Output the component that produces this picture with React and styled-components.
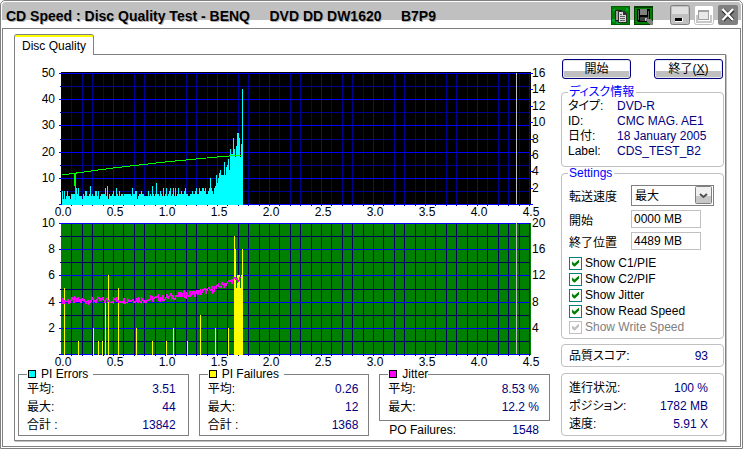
import React from 'react';
import styled, { createGlobalStyle } from 'styled-components';

const GlobalStyle = createGlobalStyle`
  * { box-sizing: border-box; }
  body {
    margin: 0;
    background: #fff;
    color: #000;
    font-family: "Liberation Sans", "Noto Sans CJK JP", sans-serif;
    font-size: 12px;
    font-feature-settings: "palt";
  }
  button, input, select { font: inherit; color: inherit; font-feature-settings: inherit; }
`;

const AppWindow = styled.div`
  display: flex;
  flex-direction: column;
  min-height: 100vh;
  padding: 1px;
  border: 1px solid #808080;
  border-radius: 5px 5px 0 0;
`;

const TitleBar = styled.header`
  display: flex;
  align-items: center;
  justify-content: space-between;
  height: 26px;
  padding: 0 3px 0 4px;
  border-radius: 4px 4px 0 0;
  background: linear-gradient(#c0c0c0 18px, #fff 18px);
`;

const Title = styled.h1`
  margin: 0;
  padding-top: 2px;
  font-size: 14px;
  line-height: 18px;
  font-weight: bold;
  white-space: pre;
  text-shadow: 1px 1px #b0b0b0;
`;

const TitleTools = styled.div`
  display: flex;
  align-items: center;
  gap: 4px;
`;

const IconButton = styled.button`
  display: block;
  width: ${(p) => (p.$wide ? 20 : 19)}px;
  height: ${(p) => (p.$wide ? 20 : 19)}px;
  margin-left: ${(p) => (p.$first ? 13 : 0)}px;
  padding: 0;
  border: 0;
  background: none;
  svg { display: block; }
`;

const Body = styled.main`
  display: flex;
  flex-direction: column;
  flex: 1;
  padding: 6px 14px 5px 11px;
  border: 1px solid #808080;
`;

const Tab = styled.button`
  z-index: 1;
  align-self: flex-start;
  height: 20px;
  margin-bottom: -1px;
  padding: 0 7px 0 7px;
  border: 1px solid #808080;
  border-top: 2px solid #ff0;
  border-bottom: 0;
  border-radius: 3px 3px 0 0;
  background: #fff;
  box-shadow: 0 -1px #808080;
  line-height: 14px;
`;

const Panel = styled.section`
  display: flex;
  flex: 1;
  gap: 5px;
  padding: 0 1px 3px 0;
  border: 1px solid #808080;
  box-shadow: 1px 1px #c0c0c0;
`;

const ChartColumn = styled.div`
  flex: 1;
  min-width: 0;
  padding-top: 9px;
`;

const ChartSvg = styled.svg`
  display: block;
  width: 100%;
  height: auto;
  overflow: visible;
  text { font-size: 12px; }
`;

const StatGroups = styled.div`
  display: grid;
  grid-template-columns: repeat(3, 1fr);
  align-items: start;
  gap: 10px;
  padding: 0 6px 0 3px;
`;

const StatBox = styled.fieldset`
  min-width: 0;
  margin: 0;
  padding: 0 ${(p) => p.$right}px ${(p) => p.$bottom}px 8px;
  border: 1px solid #808080;
`;

const StatLegend = styled.legend`
  display: flex;
  align-items: center;
  gap: 5px;
  padding: 0 ${(p) => (p.$tight ? 0 : 5)}px 0 1px;
  line-height: 12px;
`;

const Swatch = styled.span`
  width: 8px;
  height: 8px;
  border: 1px solid #000;
  background: ${(p) => p.$color};
`;

const Rows = styled.dl`
  margin: 0;
`;

const Row = styled.div`
  display: flex;
  justify-content: space-between;
  height: ${(p) => (p.$outer ? 15 : 18)}px;
  padding: ${(p) => (p.$outer ? '0 11px 0 10px' : '0')};
  line-height: 18px;
  dt, dd { margin: 0; white-space: pre; }
  dd { color: #000080; }
`;

const Sidebar = styled.aside`
  display: flex;
  flex-direction: column;
  width: 163px;
  padding-top: 4px;
`;

const Buttons = styled.div`
  display: flex;
  justify-content: space-between;
  margin-bottom: 7px;
  padding: 0 1px;
`;

const PushButton = styled.button`
  width: 69px;
  height: 20px;
  padding: 0;
  border: 1px solid #000080;
  border-radius: 3px;
  background: linear-gradient(#fff 11px, #c0c0c0 11px);
  box-shadow: inset 0 0 0 1px #e8e8e8;
  line-height: 16px;
`;

const Group = styled.fieldset`
  min-width: 0;
  margin: 0;
  padding: 0 6px ${(p) => p.$bottom || 0}px;
  border: 1px solid #c0c0c0;
  border-radius: 4px;
`;

const GroupLegend = styled.legend`
  padding: 0 2px 0 1px;
  color: #00f;
  line-height: 12px;
`;

const InfoList = styled.dl`
  display: grid;
  grid-template-columns: 49px 1fr;
  margin: 0;
  padding: 1px 0 7px;
  line-height: 15px;
  dt, dd { height: 15px; margin: 0; white-space: nowrap; }
  dd { color: #000080; }
`;

const Fields = styled.div`
  display: grid;
  grid-template-columns: 62px 1fr;
  row-gap: 4px;
  align-items: center;
  padding: 6px 3px 5px 1px;
`;

const SelectBox = styled.div`
  display: grid;
  grid-template-columns: 1fr 19px;
  height: 21px;
  border: 1px solid #808080;
`;

const Select = styled.select`
  grid-area: 1 / 1 / 2 / 3;
  width: 100%;
  height: 19px;
  padding: 0 3px;
  border: 0;
  background: #fff;
  appearance: none;
`;

const SelectArrow = styled.svg`
  grid-area: 1 / 2;
  z-index: 1;
  pointer-events: none;
`;

const TextInput = styled.input`
  width: 70px;
  height: 18px;
  padding: 0 2px;
  border: 1px solid #c0c0c0;
  background: #fff;
`;

const CheckRow = styled.label`
  display: flex;
  align-items: center;
  gap: 3px;
  height: 16px;
  padding-left: 1px;
  white-space: nowrap;
  color: ${(p) => (p.$disabled ? '#808080' : '#000')};
`;

const Checkbox = styled.input`
  display: grid;
  place-items: center;
  width: 13px;
  height: 13px;
  margin: 0;
  border: 1px solid #008080;
  background: #fff;
  appearance: none;
  &:checked::before {
    content: "";
    width: 7px;
    height: 7px;
    background: #008000;
    clip-path: polygon(0 29%, 0 71%, 29% 100%, 43% 100%, 100% 43%, 100% 0, 36% 57%);
  }
  &:disabled { border-color: #c0c0c0; }
  &:disabled::before { background: #c0c0c0; }
`;

const SummaryBox = styled.section`
  margin-top: ${(p) => p.$gap}px;
  padding: ${(p) => p.$pad}px 15px ${(p) => p.$bottom}px 7px;
  border: 1px solid #c0c0c0;
  border-radius: 4px;
`;

const LEFT = 46;
const STEP = 104;
const SPAN = 131;
const tenths = Array.from({ length: 45 }, (_, i) => i + 1);
const halves = Array.from({ length: 10 }, (_, i) => i);
const elevenths = Array.from({ length: 11 }, (_, i) => i);

const piErrors = [
  5, 2, 5, 2, 3, 5, 3, 3, 2, 4, 4, 4, 4, 4, 6, 4, 6, 3, 3, 3, 2, 4, 3, 5, 5, 3, 3, 4, 7, 3,
  4, 3, 3, 5, 5, 3, 5, 2, 3, 4, 4, 4, 4, 6, 3, 7, 2, 4, 3, 3, 4, 5, 3, 3, 6, 4, 3, 5, 3, 4,
  4, 3, 4, 4, 4, 4, 4, 4, 4, 3, 6, 4, 4, 5, 5, 2, 3, 4, 4, 5, 4, 4, 3, 3, 3, 3, 5, 3, 4, 3,
  7, 4, 3, 4, 8, 4, 4, 3, 5, 4, 3, 6, 3, 4, 6, 3, 4, 5, 6, 3, 4, 6, 3, 6, 3, 4, 6, 4, 4, 5,
  4, 4, 5, 6, 4, 4, 3, 3, 4, 4, 5, 4, 4, 5, 6, 4, 4, 6, 5, 5, 6, 6, 5, 6, 4, 4, 5, 6, 10, 6,
  5, 4, 6, 7, 11, 8, 10, 12, 13, 11, 11, 11, 16, 11, 14, 15, 17, 13, 21, 19, 19, 25, 21, 18, 22, 27, 27, 25, 18, 23, 44,
];

const piFailures = [
  [64, 5], [78, 1], [93, 2], [98, 1], [102, 1], [105, 4], [108, 6], [118, 5], [136, 2],
  [152, 1], [166, 1], [173, 2], [187, 1], [200, 3], [215, 2], [228, 2], [234, 9], [235, 8],
  [236, 5], [237, 6], [238, 6], [239, 6], [240, 5], [241, 6], [242, 8],
];

const jitterTrend = [[0, 4.05], [50, 4.1], [85, 4.15], [103, 4.3], [135, 4.65], [150, 4.9], [165, 5.4], [174, 5.7], [180, 5.6]];

function jitterAt(i) {
  const k = jitterTrend.findIndex(([x]) => x > i);
  const [x1, y1] = jitterTrend[k - 1];
  const [x2, y2] = jitterTrend[k];
  const noise = Math.sin(i * 12.9898) * 43758.5453;
  return y1 + ((y2 - y1) * (i - x1)) / (x2 - x1) + (noise - Math.floor(noise) - 0.5) * 0.5;
}

const jitterPoints = Array.from({ length: 179 }, (_, i) => `${LEFT + 1 + i},${(SPAN - jitterAt(i) * 13.1).toFixed(1)}`).join(' ');

function Chart({ label, top, height, fill, minor, major, leftLabels, rightLabels, ticks, children }) {
  return (
    <ChartSvg viewBox={`0 0 541 ${height}`} role="img" aria-label={label} shapeRendering="crispEdges">
      <g transform={`translate(0 ${top})`}>
        <rect x={LEFT} y={ticks ? -1 : 0} width="470" height={ticks ? SPAN + 2 : SPAN + 1} fill={fill} />
        {tenths.map((i) => (
          <rect key={i} x={Math.round(LEFT + (i * STEP) / 10)} y="0" width="1" height={SPAN + 2} fill={i % 5 ? minor : major} />
        ))}
        {elevenths.map((i) => (
          <rect key={i} x={i % 2 ? LEFT - 1 : LEFT - 2} y={Math.round((i * SPAN) / 10)} width={i % 2 ? 469 : 470} height="1" fill={i % 2 ? minor : '#00f'} />
        ))}
        {ticks && Array.from({ length: 17 }, (_, i) => (
          <rect key={i} x="514" y={Math.round((i * SPAN) / 16)} width={i % 2 ? 2 : 4} height="1" fill={i % 2 ? '#000080' : '#00f'} />
        ))}
        <rect x="501" y="0" width="1" height={SPAN} fill="#c0c0c0" />
        {children}
        {leftLabels.map((v, i) => (
          <text key={v} x="40" y={Math.round((i * SPAN) / 5) + 4} textAnchor="end">{v}</text>
        ))}
        {rightLabels.map((v, i) => (
          <text key={v} x="517" y={Math.round((i * SPAN) / (ticks ? 8 : 5)) + 4}>{v}</text>
        ))}
        {halves.map((i) => (
          <text key={i} x={LEFT + 2 + (i * STEP) / 2} y={SPAN + 12} textAnchor="middle">{(i / 2).toFixed(1)}</text>
        ))}
      </g>
    </ChartSvg>
  );
}

function Stats({ name, color, rows, right, bottom = 1, tight }) {
  return (
    <StatBox $right={right} $bottom={bottom}>
      <StatLegend $tight={tight}><Swatch $color={color} />{name}</StatLegend>
      <Rows>
        {rows.map(([k, v]) => <Row key={k}><dt>{k}</dt><dd>{v}</dd></Row>)}
      </Rows>
    </StatBox>
  );
}

function CopyIcon() {
  return (
    <svg width="19" height="19" viewBox="0 0 19 19" shapeRendering="crispEdges">
      <rect width="19" height="19" rx="1" fill="#006000" />
      <rect x="1" y="1" width="17" height="17" fill="#008000" />
      <path d="M2 3h3v2H2zM1 13h3v3H1zM5 16h4v2H5zM15 2h2v3h-2z" fill="#00a040" />
      <path d="M4 4h7v11H4z" fill="#202020" />
      <path d="M5 5h5v9H5z" fill="#a0a0a0" />
      <path d="M7 5h6l3 3v9H7z" fill="#303030" />
      <path d="M8 6h4v3h3v7H8z" fill="#d8d8d8" />
      <path d="M9 8h2v1H9zM9 10h5v1H9zM9 12h5v1H9zM9 14h5v1H9z" fill="#606060" />
    </svg>
  );
}

function SaveIcon() {
  return (
    <svg width="19" height="19" viewBox="0 0 19 19" shapeRendering="crispEdges">
      <rect width="19" height="19" rx="1" fill="#004000" />
      <rect x="1" y="2" width="17" height="16" fill="#008000" />
      <path d="M3 3h13v13H4l-1-1z" fill="#000" />
      <path d="M4 4h1v10H4zM14 5h1v9h-1z" fill="#606060" />
      <path d="M6 3h7v6H6z" fill="#808080" />
      <path d="M6 11h8v4H6z" fill="#404040" />
      <path d="M11 12h2v3h-2z" fill="#c0c0c0" />
      <path d="M12 13h4l3 3v3h-2l-5-4z" fill="#808080" />
    </svg>
  );
}

function MinimizeIcon() {
  return (
    <svg width="20" height="20" viewBox="0 0 20 20">
      <rect x="0.5" y="0.5" width="19" height="19" rx="2" fill="#c0c0c0" stroke="#808080" />
      <path d="M2 2h16v7H2z" fill="#e0e0e0" />
      <path d="M5 13h7v3H5z" fill="#000" />
      <path d="M5 16.500h7.500V13" stroke="#fff" fill="none" />
    </svg>
  );
}

function MaximizeIcon() {
  return (
    <svg width="20" height="20" viewBox="0 0 20 20">
      <rect x="0.5" y="0.5" width="19" height="19" rx="2" fill="#fff" stroke="#c0c0c0" />
      <path d="M2 10h16v8H2z" fill="#c8c8c8" />
      <rect x="4.500" y="5.500" width="10" height="9" fill="#e8e8e8" stroke="#a0a0a0" />
      <path d="M4 5h11v2H4z" fill="#a0a0a0" />
      <path d="M4 15.500h11.500V6" stroke="#fff" fill="none" />
    </svg>
  );
}

function CloseIcon() {
  return (
    <svg width="20" height="20" viewBox="0 0 20 20">
      <rect width="20" height="20" rx="2" fill="#808080" />
      <path d="M5 5l10 10M15 5L5 15" stroke="#303030" strokeWidth="4" />
      <path d="M4.500 4l10.500 11M15 4L4.500 15" stroke="#fff" strokeWidth="2.400" />
    </svg>
  );
}

const checks = ['Show C1/PIE', 'Show C2/PIF', 'Show Jitter', 'Show Read Speed', 'Show Write Speed'];

export default function App() {
  return (
    <AppWindow>
      <GlobalStyle />
      <TitleBar>
        <Title>{'CD Speed : Disc Quality Test - BENQ     DVD DD DW1620     B7P9'}</Title>
        <TitleTools>
          <IconButton aria-label="Copy"><CopyIcon /></IconButton>
          <IconButton aria-label="Save"><SaveIcon /></IconButton>
          <IconButton $wide $first aria-label="Minimize"><MinimizeIcon /></IconButton>
          <IconButton $wide aria-label="Maximize"><MaximizeIcon /></IconButton>
          <IconButton $wide aria-label="Close"><CloseIcon /></IconButton>
        </TitleTools>
      </TitleBar>
      <Body>
        <Tab>Disc Quality</Tab>
        <Panel>
          <ChartColumn>
            <Chart
              label="PI Errors" top={9} height={154} fill="#000" minor="#000090" major="#0000f0" ticks
              leftLabels={[50, 40, 30, 20, 10]} rightLabels={[16, 14, 12, 10, 8, 6, 4, 2]}
            >
              {piErrors.map((v, i) => {
                const h = Math.round(v * 2.62);
                return <rect key={i} x={LEFT + 1 + i} y={SPAN - h} width="1" height={h + 1} fill="#0ff" />;
              })}
              <polyline points="47,102 98,95 150,89 202,84 227,82" fill="none" stroke="#0f0" />
              <path d="M59 101h2v26h-1v-14h-1z" fill="#0f0" />
            </Chart>
            <Chart
              label="PI Failures" top={5} height={150} fill="#008000" minor="#000060" major="#0000c0"
              leftLabels={[10, 8, 6, 4, 2]} rightLabels={[20, 16, 12, 8, 4]}
            >
              {piFailures.map(([x, v]) => {
                const h = Math.round(v * 13.1);
                return <rect key={x} x={x - 15} y={SPAN - h} width="1" height={h + 1} fill="#ff0" />;
              })}
              <polyline points={jitterPoints} fill="none" stroke="#f0f" strokeWidth="1.500" />
            </Chart>
            <StatGroups>
              <Stats name="PI Errors" color="#0ff" right={12} rows={[['平均:', '3.51'], ['最大:', '44'], ['合計 :', '13842']]} />
              <Stats name="PI Failures" color="#ff0" right={10} rows={[['平均:', '0.26'], ['最大:', '12'], ['合計 :', '1368']]} />
              <div>
                <Stats name="Jitter" color="#f0f" right={10} bottom={4} tight rows={[['平均:', '8.53 %'], ['最大:', '12.2 %']]} />
                <Rows><Row $outer><dt>PO Failures:</dt><dd>1548</dd></Row></Rows>
              </div>
            </StatGroups>
          </ChartColumn>
          <Sidebar>
            <Buttons>
              <PushButton>開始</PushButton>
              <PushButton>終了(<u>X</u>)</PushButton>
            </Buttons>
            <Group>
              <GroupLegend>ディスク情報</GroupLegend>
              <InfoList>
                <dt>タイプ:</dt><dd>DVD-R</dd>
                <dt>ID:</dt><dd>CMC MAG. AE1</dd>
                <dt>日付:</dt><dd>18 January 2005</dd>
                <dt>Label:</dt><dd>CDS_TEST_B2</dd>
              </InfoList>
            </Group>
            <Group $bottom={3}>
              <GroupLegend>Settings</GroupLegend>
              <Fields>
                <label htmlFor="speed">転送速度</label>
                <SelectBox>
                  <Select id="speed" defaultValue="max"><option value="max">最大</option></Select>
                  <SelectArrow width="19" height="19" viewBox="0 0 19 19" aria-hidden="true">
                    <rect x="1.500" y="0.500" width="16" height="17" rx="1" fill="#f0f0f0" stroke="#808080" />
                    <path d="M2 10h15v7H2z" fill="#c8c8c8" />
                    <path d="M6 8l3.500 3L13 8" fill="none" stroke="#505050" strokeWidth="2" />
                  </SelectArrow>
                </SelectBox>
                <label htmlFor="start">開始</label>
                <TextInput id="start" defaultValue="0000 MB" />
                <label htmlFor="end">終了位置</label>
                <TextInput id="end" defaultValue="4489 MB" />
              </Fields>
              {checks.map((name, i) => (
                <CheckRow key={name} $disabled={i === 4}>
                  <Checkbox type="checkbox" defaultChecked disabled={i === 4} />{name}
                </CheckRow>
              ))}
            </Group>
            <SummaryBox $gap={5} $pad={2} $bottom={1}>
              <Rows><Row><dt>品質スコア:</dt><dd>93</dd></Row></Rows>
            </SummaryBox>
            <SummaryBox $gap={6} $pad={5} $bottom={2}>
              <Rows>
                <Row><dt>進行状況:</dt><dd>100 %</dd></Row>
                <Row><dt>ポジション:</dt><dd>1782 MB</dd></Row>
                <Row><dt>速度:</dt><dd>5.91 X</dd></Row>
              </Rows>
            </SummaryBox>
          </Sidebar>
        </Panel>
      </Body>
    </AppWindow>
  );
}
